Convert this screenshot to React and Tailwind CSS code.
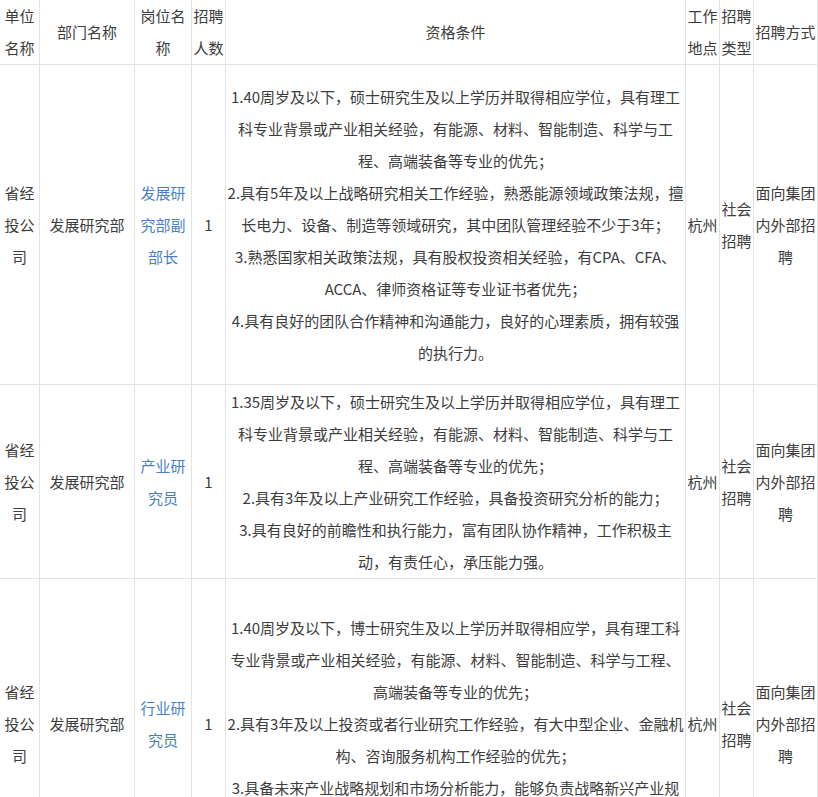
import React from 'react';

const rows = [
  {
    post: '发展研究部副部长',
    h: 'h-[320px]',
    lines: [
      '1.40周岁及以下，硕士研究生及以上学历并取得相应学位，具有理工科专业背景或产业相关经验，有能源、材料、智能制造、科学与工程、高端装备等专业的优先；',
      '2.具有5年及以上战略研究相关工作经验，熟悉能源领域政策法规，擅长电力、设备、制造等领域研究，其中团队管理经验不少于3年；',
      '3.熟悉国家相关政策法规，具有股权投资相关经验，有CPA、CFA、ACCA、律师资格证等专业证书者优先；',
      '4.具有良好的团队合作精神和沟通能力，良好的心理素质，拥有较强的执行力。',
    ],
  },
  {
    post: '产业研究员',
    h: 'h-[194px]',
    lines: [
      '1.35周岁及以下，硕士研究生及以上学历并取得相应学位，具有理工科专业背景或产业相关经验，有能源、材料、智能制造、科学与工程、高端装备等专业的优先；',
      '2.具有3年及以上产业研究工作经验，具备投资研究分析的能力；',
      '3.具有良好的前瞻性和执行能力，富有团队协作精神，工作积极主动，有责任心，承压能力强。',
    ],
  },
  {
    post: '行业研究员',
    h: 'h-[290px]',
    lines: [
      '1.40周岁及以下，博士研究生及以上学历并取得相应学，具有理工科专业背景或产业相关经验，有能源、材料、智能制造、科学与工程、高端装备等专业的优先；',
      '2.具有3年及以上投资或者行业研究工作经验，有大中型企业、金融机构、咨询服务机构工作经验的优先；',
      '3.具备未来产业战略规划和市场分析能力，能够负责战略新兴产业规划的制定与修订工作；',
    ],
  },
];

const td = 'border border-[#e3e3e3] text-center align-middle px-0';

export default function App() {
  return (
    <div className="w-[818px] h-[797px] overflow-hidden bg-white text-[#3d3d3d] text-[15px] leading-[32px]" style={{ fontFamily: '"Noto Sans CJK SC", sans-serif' }}>
      <table className="border-collapse table-fixed w-[818px] -ml-px -mt-px">
        <colgroup>
          <col className="w-[40px]" />
          <col className="w-[95px]" />
          <col className="w-[57px]" />
          <col className="w-[34px]" />
          <col className="w-[460px]" />
          <col className="w-[34px]" />
          <col className="w-[34px]" />
          <col className="w-[64px]" />
        </colgroup>
        <tbody>
          <tr className="h-[63px]">
            <td className={td}>单位名称</td>
            <td className={td}>部门名称</td>
            <td className={td}>岗位名称</td>
            <td className={td}>招聘人数</td>
            <td className={td}>资格条件</td>
            <td className={td}>工作地点</td>
            <td className={td}>招聘类型</td>
            <td className={td}>招聘方式</td>
          </tr>
          {rows.map((r, i) => (
            <tr key={i} className={r.h}>
              <td className={td}>省经投公司</td>
              <td className={td}>发展研究部</td>
              <td className={`${td} text-[#4a7fc1]`}>{r.post}</td>
              <td className={td}>1</td>
              <td className={td}>
                {r.lines.map((l, j) => <div key={j}>{l}</div>)}
              </td>
              <td className={td}>杭州</td>
              <td className={td}>社会招聘</td>
              <td className={td}>面向集团内外部招聘</td>
            </tr>
          ))}
        </tbody>
      </table>
    </div>
  );
}
